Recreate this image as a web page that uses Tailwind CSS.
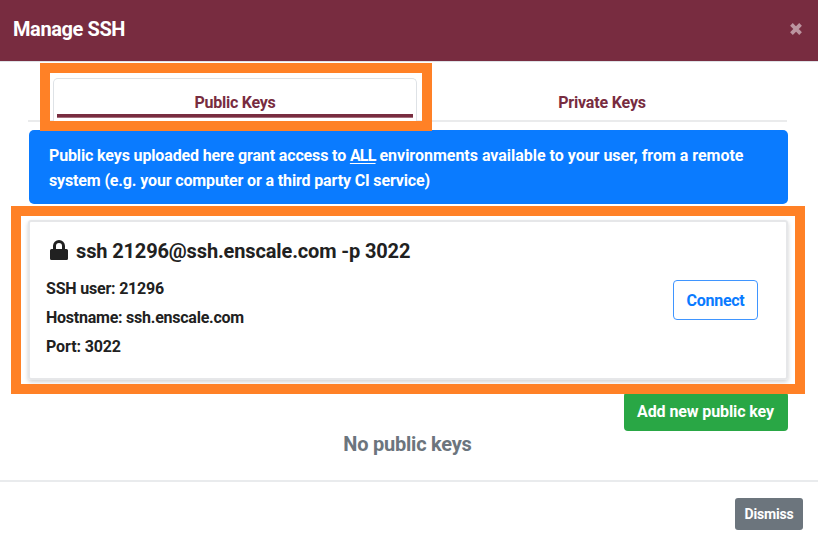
<!DOCTYPE html>
<html lang="en">
<head>
<meta charset="utf-8">
<title>Manage SSH</title>
<script src="https://cdn.jsdelivr.net/npm/@tailwindcss/browser@4"></script>
</head>
<body class="bg-white">
<div class="relative flex h-[542px] w-[818px] flex-col overflow-hidden bg-white font-['Roboto',sans-serif] font-bold text-[#212121]">
  <header class="flex h-[62px] shrink-0 items-center justify-between border-b border-[#dee2e6] bg-[#782c40] pr-[16px] pl-[13px]">
    <h1 class="pb-[3px] text-[20px] leading-[30px] tracking-[-0.4px] text-white">Manage SSH</h1>
    <button class="mt-[-3px]" aria-label="Close">
      <svg class="block h-[12px] w-[12px]" viewBox="0 0 12 12" fill="none" stroke="#bc95a0" stroke-width="3.8" stroke-linecap="square"><path d="M2.8 2.8 9.2 9.2M9.2 2.8 2.8 9.2"/></svg>
    </button>
  </header>

  <main class="flex h-[418px] shrink-0 flex-col pr-[31px] pl-[28px]">
    <nav class="mt-[16px] flex h-[44px] border-b-2 border-[#eaebec] pl-[25px] text-[16px] leading-[24px] text-[#782c40]">
      <div class="flex h-[44px] w-[364px] flex-col rounded-t-[5px] border border-b-0 border-[#dee2e6] bg-white px-[3px] pt-[12px]">
        <span class="text-center tracking-[-0.27px]">Public Keys</span>
        <div class="mt-[-1px] h-[4px] shrink-0 border-b border-[#a56e7b] bg-[#782c40]"></div>
      </div>
      <div class="flex-1 pt-[13px] text-center tracking-[-0.17px]">Private Keys</div>
    </nav>

    <section class="mt-[8px] ml-[0.5px] h-[74px] w-[759px] rounded-[5px] bg-[#0a7bff] pt-[13px] pl-[20.5px] text-[16px] leading-[25px] text-white">
      <p class="whitespace-nowrap"><span class="tracking-[-0.14px]">Public keys uploaded here grant access to </span><u class="tracking-[-0.8px] underline-offset-2">ALL</u><span class="tracking-[-0.02px]"> environments available to your user, from a remote</span></p>
      <p class="whitespace-nowrap tracking-[-0.14px]">system (e.g. your computer or a third party CI service)</p>
    </section>

    <section class="mt-[16px] flex h-[160px] w-[760px] shrink-0 items-center justify-between rounded-[3px] border-2 border-[#e6e7e9] pr-[28px] pl-[16px] shadow-[0_2px_4px_rgba(0,0,0,0.18)]">
      <div class="h-full">
        <h2 class="mt-[14px] flex h-[30px] items-center text-[20px] leading-[30px] tracking-[-0.14px]">
          <svg class="mt-[-2px] mr-[8px] ml-[4px] h-[20px] w-[18px]" viewBox="0 0 18 20" fill="#212121"><path fill-rule="evenodd" d="M1.5 9H3V6a6 6 0 0 1 12 0V9h1.5a1.5 1.5 0 0 1 1.5 1.5v8a1.5 1.5 0 0 1-1.5 1.5H1.5a1.5 1.5 0 0 1-1.5-1.5v-8A1.5 1.5 0 0 1 1.5 9ZM6 9h6V6a3 3 0 0 0-6 0Z"/></svg>
          <span>ssh 21296@ssh.enscale.com -p 3022</span>
        </h2>
        <div class="mt-[8px] text-[16px] leading-[29px]">
          <p class="tracking-[-0.2px]">SSH user: 21296</p>
          <p class="tracking-[-0.24px]">Hostname: ssh.enscale.com</p>
          <p class="tracking-[-0.12px]">Port: 3022</p>
        </div>
      </div>
      <button class="h-[40px] w-[85px] rounded-[4px] border border-[#3f95ff] pt-[1px] text-[16px] tracking-[-0.25px] text-[#0a7bff]">Connect</button>
    </section>

    <div class="mt-[12px] flex justify-end">
      <button class="mr-[-0.5px] h-[39px] w-[164px] rounded-[4px] bg-[#29a745] pt-[1px] text-[16px] tracking-[-0.11px] text-white">Add new public key</button>
    </div>
    <p class="mt-[-2px] text-center text-[20px] leading-[30px] tracking-[-0.23px] text-[#6c757d]">No public keys</p>
  </main>

  <footer class="flex flex-1 items-start justify-end border-t-2 border-[#e9ebed] pt-[16px] pr-[15px]">
    <button class="h-[32px] w-[68px] rounded-[3px] bg-[#6c757d] pt-[1px] text-[14px] tracking-[-0.2px] text-white">Dismiss</button>
  </footer>

  <div class="absolute top-[63px] left-[40px] h-[68px] w-[392px] border-10 border-[#ff8126]"></div>
  <div class="absolute top-[206px] left-[11px] h-[188px] w-[794px] border-10 border-[#ff8126]"></div>
</div>
</body>
</html>
